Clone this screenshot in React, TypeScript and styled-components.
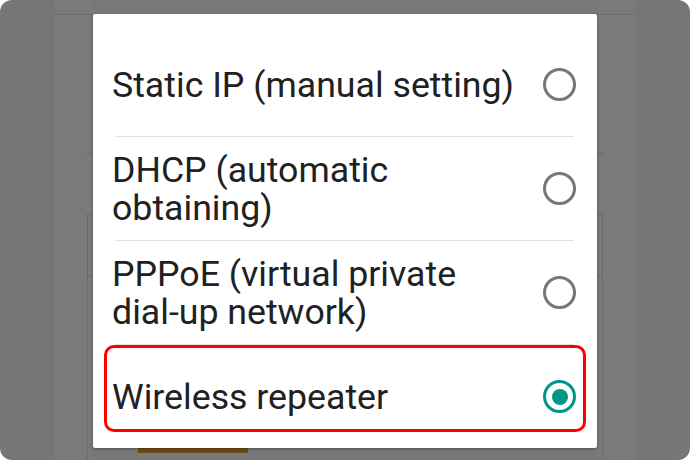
import React from "react";
import styled, { createGlobalStyle } from "styled-components";

const Global = createGlobalStyle`
  html, body { margin: 0; padding: 0; background: #ffffff; }
  body { font-family: Roboto, "Noto Sans", "Liberation Sans", sans-serif; }
  * { box-sizing: border-box; }
`;

const Frame = styled.div`
  position: relative;
  width: 690px;
  height: 460px;
  border-radius: 12px;
  overflow: hidden;
  background: #767676;
`;

const BgApp = styled.div`
  height: 100%;
  margin: 0 54px;
  padding-top: 14px;
  display: flex;
  flex-direction: column;
  background: linear-gradient(
    to right,
    #7a7a7a 0 38px,
    #787878 38px calc(100% - 38px),
    #7a7a7a calc(100% - 38px)
  );
`;

const TopLine = styled.div`
  height: 1px;
  background: #6a706e;
`;

const BgContent = styled.div`
  flex: 1;
  margin: 0 33px;
  padding-top: 138px;
  display: flex;
  flex-direction: column;
`;

const BgDivider = styled.div`
  height: 1px;
  background: #686868;
  margin-bottom: 60px;
`;

const BgField = styled.div`
  height: 62px;
  border: 1px solid #686868;
`;

const BgPanel = styled.div`
  flex: 1;
  border-left: 1px solid #6c6c6c;
  border-right: 1px solid #6c6c6c;
  display: flex;
  flex-direction: column;
  justify-content: flex-end;
  padding-bottom: 7px;
`;

const BgButton = styled.div`
  margin-left: 50px;
  width: 110px;
  height: 5px;
  background: #6b4a14;
`;

const Dialog = styled.div`
  position: absolute;
  left: 93px;
  top: 14px;
  width: 504px;
  height: 434px;
  background: #ffffff;
  border-radius: 2px;
  box-shadow: 0 1px 3px rgba(0, 0, 0, 0.35);
  padding-top: 19px;
  display: flex;
  flex-direction: column;
`;

const Option = styled.div`
  position: relative;
  height: 103px;
  padding: 0 21px 0 19px;
  display: flex;
  align-items: center;
`;

const Label = styled.div`
  width: 408px;
  font-size: 35.7px;
  line-height: 38px;
  color: #212121;
  letter-spacing: 0;
  hyphens: none;
`;

const Divider = styled.div`
  height: 1px;
  margin: 0 23px 0 22px;
  background: #e2e2e2;
`;

const Radio = styled.div<{ $checked?: boolean }>`
  margin-left: auto;
  flex: none;
  width: 33px;
  height: 33px;
  border-radius: 50%;
  border: 3px solid ${(p) => (p.$checked ? "#009688" : "#767676")};
  display: flex;
  align-items: center;
  justify-content: center;
  &::after {
    content: "";
    display: ${(p) => (p.$checked ? "block" : "none")};
    width: 16px;
    height: 16px;
    border-radius: 50%;
    background: #009688;
  }
`;

const Highlight = styled.div`
  position: absolute;
  left: 11px;
  right: 11px;
  top: 0;
  bottom: 16px;
  border: 3px solid #ff0000;
  border-radius: 10px;
  pointer-events: none;
`;

const options = [
  { label: "Static IP (manual setting)", checked: false },
  { label: "DHCP (automatic obtaining)", checked: false },
  { label: "PPPoE (virtual private dial\u2011up network)", checked: false },
  { label: "Wireless repeater", checked: true },
];

export default function App() {
  return (
    <>
      <Global />
      <Frame>
        <BgApp>
          <TopLine />
          <BgContent>
            <BgDivider />
            <BgField />
            <BgPanel>
              <BgButton />
            </BgPanel>
          </BgContent>
        </BgApp>
        <Dialog>
          {options.map((o, i) => (
            <React.Fragment key={o.label}>
              {i > 0 && <Divider />}
              <Option>
                <Label>{o.label}</Label>
                <Radio $checked={o.checked} />
                {o.checked && <Highlight />}
              </Option>
            </React.Fragment>
          ))}
        </Dialog>
      </Frame>
    </>
  );
}
